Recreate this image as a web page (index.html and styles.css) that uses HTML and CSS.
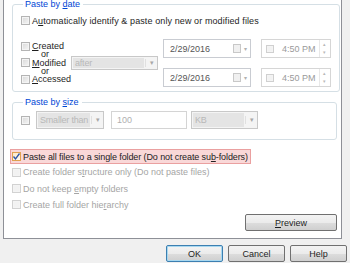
FILE: index.html
```html
<!DOCTYPE html>
<html lang="en">
<head>
    <meta charset="UTF-8">
    <title>Paste options</title>
    <link rel="stylesheet" href="styles.css">
</head>
<body>

<div class="panel">
    <fieldset class="group group-date">
        <legend>Paste by <u>d</u>ate</legend>

        <label class="check-row auto-row">
            <span class="box"></span>
            <span>A<u>u</u>tomatically identify &amp; paste only new or modified files</span>
        </label>

        <div class="date-area">
            <div class="stack">
                <label class="check-row"><span class="box"></span><span><u>C</u>reated</span></label>
                <div class="or">or</div>
                <label class="check-row"><span class="box"></span><span><u>M</u>odified</span></label>
                <div class="or">or</div>
                <label class="check-row"><span class="box"></span><span><u>A</u>ccessed</span></label>
            </div>

            <div class="select select-after">
                <span class="select-value">after</span>
                <span class="select-arrow">&#9662;</span>
            </div>

            <div class="pickers">
                <div class="picker-row">
                    <div class="datebox">
                        <span class="date-text">2/29/2016</span>
                        <span class="cal-icon"></span>
                        <span class="date-arrow">&#9662;</span>
                    </div>
                    <div class="timebox">
                        <span class="box small"></span>
                        <span class="time-text">4:50 PM</span>
                        <span class="spin"><i>&#9652;</i><i>&#9662;</i></span>
                    </div>
                </div>
                <div class="picker-row">
                    <div class="datebox">
                        <span class="date-text">2/29/2016</span>
                        <span class="cal-icon"></span>
                        <span class="date-arrow">&#9662;</span>
                    </div>
                    <div class="timebox">
                        <span class="box small"></span>
                        <span class="time-text">4:50 PM</span>
                        <span class="spin"><i>&#9652;</i><i>&#9662;</i></span>
                    </div>
                </div>
            </div>
        </div>
    </fieldset>

    <fieldset class="group group-size">
        <legend>Paste by <u>s</u>ize</legend>
        <div class="size-row">
            <span class="box"></span>
            <div class="select select-smaller">
                <span class="select-value">Smaller than</span>
                <span class="select-arrow">&#9662;</span>
            </div>
            <div class="textbox">100</div>
            <div class="select select-kb">
                <span class="select-value">KB</span>
                <span class="select-arrow">&#9662;</span>
            </div>
        </div>
    </fieldset>

    <div class="options">
        <label class="check-row option highlight">
            <span class="box checked">
                <svg width="9" height="9" viewBox="0 0 9 9"><path d="M1.5 4.5 L3.5 7 L7.5 1.5" fill="none" stroke="#2a54a8" stroke-width="1.3"/></svg>
            </span>
            <span>Paste all files to a single folder (Do not create su<u>b</u>-folders)</span>
        </label>
        <label class="check-row option disabled"><span class="box"></span><span>Create folder s<u>t</u>ructure only (Do not paste files)</span></label>
        <label class="check-row option disabled"><span class="box"></span><span>Do not keep <u>e</u>mpty folders</span></label>
        <label class="check-row option disabled"><span class="box"></span><span>Create full folder hie<u>r</u>archy</span></label>
    </div>

    <div class="preview-line">
        <button class="btn btn-preview"><u>P</u>review</button>
    </div>
</div>

<div class="dialog-buttons">
    <button class="btn btn-default">OK</button>
    <button class="btn">Cancel</button>
    <button class="btn">Help</button>
</div>

</body>
</html>
```

FILE: styles.css
```css
body {
    margin: 0;
    width: 350px;
    height: 263px;
    overflow: hidden;
    background: #f0f0f0;
    font-family: 'Liberation Sans', Arial, sans-serif;
    font-size: 9px;
    color: #1e1e1e;
}

u {
    text-decoration: underline;
    text-underline-offset: 1px;
}

/* tab page */
.panel {
    box-sizing: border-box;
    width: 339px;
    height: 239px;
    margin-left: 3px;
    background: #fff;
    border: 1px solid #8e9097;
    border-top: none;
    padding: 0 4px 0 8px;
}

.group {
    margin: 0;
    padding: 0 8px;
    border: 1px solid #d5dfe5;
    border-radius: 3px;
}

.group legend {
    padding: 0 3px 0 2px;
    margin-left: 2px;
    color: #0046d5;
    line-height: 9px;
}

.group-date {
    height: 92px;
    box-sizing: border-box;
}

/* checkboxes */
.box {
    box-sizing: border-box;
    display: inline-block;
    flex: none;
    width: 9px;
    height: 9px;
    border: 1px solid #b4b4b4;
    background: linear-gradient(135deg, #d8d8d8, #f6f6f6);
    box-shadow: inset 0 0 0 1px #f4f4f4;
}

.box.small {
    width: 8px;
    height: 8px;
    border-color: #d0d0d0;
    background: #f2f2f2;
}

.box.checked {
    position: relative;
    border-color: #e0a050;
    background: linear-gradient(135deg, #fde8c4, #fffaf0);
    box-shadow: none;
}

.box.checked svg {
    position: absolute;
    left: -1px;
    top: -1px;
}

.check-row {
    display: flex;
    align-items: center;
    gap: 2px;
    height: 9px;
    white-space: nowrap;
}

.auto-row {
    margin-top: 7px;
    letter-spacing: 0.1px;
}

/* created / modified / accessed */
.date-area {
    display: flex;
    align-items: flex-start;
    margin-top: 17px;
}

.stack {
    width: 49px;
    display: flex;
    flex-direction: column;
    line-height: 8px;
}

.stack .check-row {
    height: 8.3px;
}

.or {
    height: 8.3px;
    line-height: 8.3px;
    padding-left: 20px;
}

.select {
    box-sizing: border-box;
    display: flex;
    align-items: center;
    height: 14px;
    border: 1px solid #c8c8c8;
    background: #f4f4f4;
    color: #b8b8b8;
    white-space: nowrap;
}

.select-value {
    flex: 1;
    align-self: stretch;
    display: flex;
    align-items: center;
    margin: 1px;
    padding-left: 2px;
    background: #e4e4e4;
    letter-spacing: -0.2px;
}

.select-arrow {
    width: 11px;
    text-align: center;
    font-size: 7px;
    color: #a8a8a8;
    border-left: 1px solid #e0e0e0;
}

.select-after {
    width: 87px;
    margin-top: 14px;
    margin-left: 1px;
}

.pickers {
    margin-left: 5px;
    margin-top: -3px;
    display: flex;
    flex-direction: column;
    gap: 10px;
}

.picker-row {
    display: flex;
    gap: 10px;
}

.datebox,
.timebox {
    box-sizing: border-box;
    height: 19px;
    display: flex;
    align-items: center;
    border: 1px solid #c9ccd2;
    background: #fff;
}

.datebox {
    width: 88px;
    padding-left: 6px;
}

.date-text {
    flex: 1;
    color: #555;
}

.cal-icon {
    width: 6px;
    height: 7px;
    border: 1px solid #c8c8c8;
    background: #f0f0f0;
}

.date-arrow {
    width: 9px;
    text-align: center;
    font-size: 6px;
    color: #b0b0b0;
}

.timebox {
    width: 70px;
    padding-left: 4px;
    border-color: #d6d6d6;
}

.time-text {
    flex: 1;
    padding-left: 8px;
    color: #9a9a9a;
}

.spin {
    display: flex;
    flex-direction: column;
    align-self: stretch;
    width: 8px;
    margin-right: 2px;
    font-size: 5px;
    line-height: 8px;
    text-align: center;
    color: #b8b8b8;
    border-left: 1px solid #e8e8e8;
}

.spin i {
    font-style: normal;
}

/* size */
.group-size {
    margin-top: 6px;
    height: 42px;
    box-sizing: border-box;
}

.size-row {
    display: flex;
    align-items: center;
    margin-top: 4px;
}

.select-smaller {
    width: 68px;
    height: 18px;
    margin-left: 6px;
}

.textbox {
    box-sizing: border-box;
    width: 76px;
    height: 18px;
    margin-left: 7px;
    padding-left: 5px;
    line-height: 16px;
    border: 1px solid #d4d4d4;
    color: #b0b0b0;
}

.select-kb {
    width: 67px;
    height: 18px;
    margin-left: 4px;
}

/* options */
.options {
    margin-top: 9px;
    margin-left: -2px;
}

.option {
    height: 16.4px;
    padding-left: 2px;
}

.highlight {
    box-sizing: border-box;
    width: 241px;
    height: 15px;
    background: #f9d8d8;
    border: 1px solid #eaa0a0;
    padding-left: 1px;
    color: #222;
    letter-spacing: -0.1px;
}

.disabled {
    color: #a5a5a5;
}

.disabled .box {
    border-color: #d2d2d2;
    background: #f2f2f2;
}

.preview-line {
    display: flex;
    justify-content: flex-end;
    margin-top: 1px;
}

/* buttons */
.btn {
    box-sizing: border-box;
    height: 17px;
    padding: 0;
    font-family: inherit;
    font-size: 9px;
    color: #1e1e1e;
    border: 1px solid #707070;
    border-radius: 2px;
    background: linear-gradient(#f3f3f3 0%, #ebebeb 50%, #dddddd 51%, #cfcfcf 100%);
}

.btn-preview {
    width: 92px;
}

.dialog-buttons {
    display: flex;
    justify-content: flex-end;
    gap: 5px;
    margin-top: 6px;
    padding-right: 3px;
}

.dialog-buttons .btn {
    width: 57px;
}

.btn-default {
    border-color: #3c7fb1;
    box-shadow: inset 0 0 0 1px #a8d8f0;
}
```
